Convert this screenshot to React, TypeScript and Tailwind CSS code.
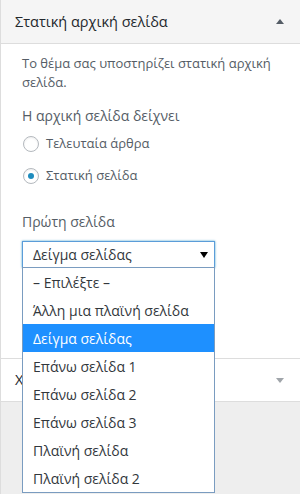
import { useState } from "react";

const pages = [
  "– Επιλέξτε –",
  "Άλλη μια πλαϊνή σελίδα",
  "Δείγμα σελίδας",
  "Επάνω σελίδα 1",
  "Επάνω σελίδα 2",
  "Επάνω σελίδα 3",
  "Πλαϊνή σελίδα",
  "Πλαϊνή σελίδα 2",
];

function Radio({ checked, label }: { checked?: boolean; label: string }) {
  return (
    <label className="flex items-center gap-[7px] h-[20px]">
      <span className="w-[16px] h-[16px] rounded-full border border-[#b4b9be] bg-white shadow-[inset_0_1px_2px_rgba(0,0,0,0.07)] flex items-center justify-center">
        {checked && <span className="w-[6px] h-[6px] rounded-full bg-[#1e8cbe]" />}
      </span>
      <span className="text-[13px] text-[#555d66]">{label}</span>
    </label>
  );
}

export default function App() {
  const [selected] = useState(2);

  return (
    <div
      className="w-[300px] h-[494px] overflow-hidden bg-[#eeeeee] border-l border-[#dddddd] flex flex-col"
      style={{ fontFamily: '"Open Sans", "Noto Sans", sans-serif' }}
    >
      {/* Section header */}
      <div className="h-[44px] shrink-0 bg-[#f5f5f5] border-b border-[#dddddd] flex items-center justify-between pl-[14px] pr-[16px]">
        <h3 className="text-[14.5px] text-[#23282d]">Στατική αρχική σελίδα</h3>
        <span className="w-0 h-0 border-x-[4px] border-x-transparent border-b-[5px] border-b-[#555d66]" />
      </div>

      {/* Section content */}
      <div className="h-[314px] shrink-0 bg-white pl-[21px] pr-[12px] pt-[10px]">
        <p className="text-[13px] leading-[19px] text-[#555d66]">
          Το θέμα σας υποστηρίζει στατική αρχική σελίδα.
        </p>

        <div className="mt-[14px] text-[14px] leading-[20px] text-[#555d66]">Η αρχική σελίδα δείχνει</div>
        <div className="mt-[8px] flex flex-col gap-[12px] pl-px">
          <Radio label="Τελευταία άρθρα" />
          <Radio checked label="Στατική σελίδα" />
        </div>

        <div className="mt-[26px] text-[14px] leading-[20px] text-[#555d66]">Πρώτη σελίδα</div>

        <div className="relative mt-[9px] w-[193px]">
          <div className="h-[27px] border border-[#5b9dd9] shadow-[0_0_2px_rgba(30,140,190,0.8)] bg-white flex items-center justify-between pl-[10px] pr-[6px]">
            <span className="text-[14px] text-[#32373c]">{pages[selected]}</span>
            <span className="w-0 h-0 border-x-[4px] border-x-transparent border-t-[6px] border-t-black" />
          </div>

          {/* Open dropdown list */}
          <ul className="absolute left-0 top-[26px] z-10 w-[193px] bg-white border border-[#7a9cc0]">
            {pages.map((p, i) => (
              <li
                key={p}
                className={
                  i === selected
                    ? "h-[28px] flex items-center pl-[10px] text-[14px] bg-[#1e90ff] text-white"
                    : "h-[28px] flex items-center pl-[10px] text-[14px] text-[#32373c]"
                }
              >
                {p}
              </li>
            ))}
          </ul>
        </div>
      </div>

      {/* Next section header, mostly hidden under the open list */}
      <div className="h-[44px] shrink-0 bg-white border-y border-[#dddddd] flex items-center justify-between pl-[14px] pr-[16px]">
        <h3 className="text-[14.5px] text-[#23282d]">Χ</h3>
        <span className="w-0 h-0 border-x-[4px] border-x-transparent border-t-[5px] border-t-[#a0a5aa]" />
      </div>
    </div>
  );
}
